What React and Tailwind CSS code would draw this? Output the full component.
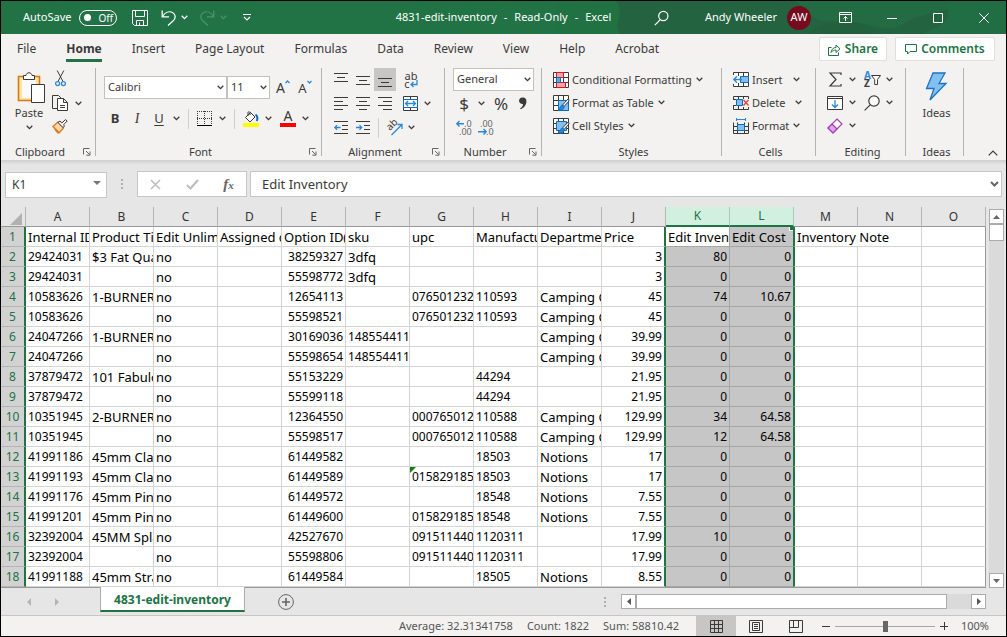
import { useState } from 'react';
import clsx from 'clsx';
import { twMerge } from 'tailwind-merge';

const tabs = ['File', 'Home', 'Insert', 'Page Layout', 'Formulas', 'Data', 'Review', 'View', 'Help', 'Acrobat'];
const columns = ['A', 'B', 'C', 'D', 'E', 'F', 'G', 'H', 'I', 'J', 'K', 'L', 'M', 'N', 'O'];
const numeric = ['E', 'J', 'K', 'L'];
const headings = ['Internal ID', 'Product Title', 'Edit Unlimited', 'Assigned categories', 'Option ID(s)', 'sku', 'upc', 'Manufacturer', 'Department', 'Price', 'Edit Inventory', 'Edit Cost', 'Inventory Note', null, ''];

const rows = [
  ['29424031', '$3 Fat Quarters', 'no', '', '38259327', '3dfq', '', '', '', '3', '80', '0'],
  ['29424031', '', 'no', '', '55598772', '3dfq', '', '', '', '3', '0', '0'],
  ['10583626', '1-BURNER', 'no', '', '12654113', '', '076501232', '110593', 'Camping Gear', '45', '74', '10.67'],
  ['10583626', '', 'no', '', '55598521', '', '076501232', '110593', 'Camping Gear', '45', '0', '0'],
  ['24047266', '1-BURNER', 'no', '', '30169036', '148554411', '', '', 'Camping Gear', '39.99', '0', '0'],
  ['24047266', '', 'no', '', '55598654', '148554411', '', '', 'Camping Gear', '39.99', '0', '0'],
  ['37879472', '101 Fabulous', 'no', '', '55153229', '', '', '44294', '', '21.95', '0', '0'],
  ['37879472', '', 'no', '', '55599118', '', '', '44294', '', '21.95', '0', '0'],
  ['10351945', '2-BURNER', 'no', '', '12364550', '', '000765012', '110588', 'Camping Gear', '129.99', '34', '64.58'],
  ['10351945', '', 'no', '', '55598517', '', '000765012', '110588', 'Camping Gear', '129.99', '12', '64.58'],
  ['41991186', '45mm Clasp', 'no', '', '61449582', '', '', '18503', 'Notions', '17', '0', '0'],
  ['41991193', '45mm Clasp', 'no', '', '61449589', '', '015829185', '18503', 'Notions', '17', '0', '0'],
  ['41991176', '45mm Pins', 'no', '', '61449572', '', '', '18548', 'Notions', '7.55', '0', '0'],
  ['41991201', '45mm Pins', 'no', '', '61449600', '', '015829185', '18548', 'Notions', '7.55', '0', '0'],
  ['32392004', '45MM Splash', 'no', '', '42527670', '', '091511440', '1120311', '', '17.99', '10', '0'],
  ['32392004', '', 'no', '', '55598806', '', '091511440', '1120311', '', '17.99', '0', '0'],
  ['41991188', '45mm Straight', 'no', '', '61449584', '', '', '18505', 'Notions', '8.55', '0', '0'],
];

function Icon({ w = 16, h = 16, className, children }) {
  return (
    <svg width={w} height={h} viewBox={`0 0 ${w} ${h}`} fill="none" stroke="#3b3a39" className={clsx('shrink-0 overflow-visible', className)} aria-hidden="true">
      {children}
    </svg>
  );
}

function Chevron({ className }) {
  return (
    <Icon w={7} h={5} className={className}>
      <path d="M.7 .8 3.5 3.6 6.3 .8" stroke="currentColor" strokeWidth="1.3" />
    </Icon>
  );
}

function Drop({ label, className }) {
  return (
    <button type="button" aria-label={label} className={clsx('flex h-5 w-3 shrink-0 items-center justify-center', className)}>
      <Chevron />
    </button>
  );
}

function Tool({ label, className, children }) {
  return (
    <button type="button" aria-label={label} className={twMerge('flex h-[23px] w-[22px] shrink-0 items-center justify-center', className)}>
      {children}
    </button>
  );
}

function Divider({ className }) {
  return <span className={clsx('h-5 w-px bg-[#d2d0ce]', className)} />;
}

function Picker({ label, value, className }) {
  return (
    <div className={clsx('relative h-[23px]', className)}>
      <select aria-label={label} defaultValue={value} className="block h-full w-full appearance-none border border-[#c3c1bf] bg-white pl-[3px] text-[11px] text-[#3b3a39]">
        <option>{value}</option>
      </select>
      <Chevron className="pointer-events-none absolute top-[9px] right-[3px]" />
    </div>
  );
}

function Group({ title, launcher, className, bodyClass, children }) {
  return (
    <section aria-label={title} className={clsx('flex shrink-0 pt-[2px]', className)}>
      <div className="flex min-w-0 flex-1 flex-col">
        <div className={clsx('h-[78px]', bodyClass)}>{children}</div>
        <div className="flex h-3 items-center pr-1">
          <span className={clsx('flex-1 text-center text-[11px] leading-3', launcher ? 'pr-1' : 'pl-2')}>{title}</span>
          {launcher && (
            <button type="button" aria-label={`${title} settings`}>
              <Icon w={8} h={8}>
                <path d="M.5 6.5V.5H6.5M3 3 6.5 6.5M7 3.5V7.2H3.3" stroke="#666" />
              </Icon>
            </button>
          )}
        </div>
      </div>
      <div className="mb-1 w-px bg-[#b5b3b1]" />
    </section>
  );
}

function Lines({ ys, xs }) {
  return (
    <Icon w={14} h={14}>
      {ys.map((y, i) => (
        <path key={y} d={`M${xs[i][0]} ${y}.5H${xs[i][1]}`} />
      ))}
    </Icon>
  );
}

const SheetBase = () => <path d="M.5 .5H15.5V15.5H.5ZM.5 5.5H15.5M.5 10.5H15.5M5.5 .5V15.5M10.5 .5V15.5" fill="#fff" />;

function ConditionalIcon() {
  return (
    <Icon>
      <SheetBase />
      <path d="M3.5 .5H10.5V5.5H3.5ZM3.5 10.5H12.5V15.5H3.5Z" fill="#f9a3a3" stroke="#e81123" />
      <path d="M3.5 5.5H7.5V10.5H3.5Z" fill="#5fa8e0" stroke="#0f6cbd" />
    </Icon>
  );
}

function BrushSheetIcon({ full }) {
  return (
    <Icon>
      <SheetBase />
      <path d={full ? 'M3.5 3.5H13.5V12.5H3.5Z' : 'M5.5 5.5H15.5V15.5H5.5Z'} fill="#83beec" stroke="#0f6cbd" />
      <path d="M15.5 3.5 9.5 10 11 11.5 16 6Z" fill="#fff" />
      <path d="M9.5 10C7.5 10.3 8 13 5 14.5 8 16.2 11.3 14.5 11 11.5Z" fill="#2b88d8" stroke="#0f6cbd" />
    </Icon>
  );
}

function InsertIcon() {
  return (
    <Icon>
      <path d="M.5 3V.5H15.5V14.5H.5V12M5.5 .5V4M10.5 .5V14.5M5.5 11V14.5" fill="#fff" />
      <path d="M7.5 4.5H15.5V10.5H7.5Z" fill="#83beec" stroke="#0f6cbd" />
      <path d="M9 7.5H1M4 4.2 .8 7.5 4 10.8" stroke="#2b88d8" strokeWidth="1.4" />
    </Icon>
  );
}

function DeleteIcon() {
  return (
    <Icon>
      <path d="M.5 4V1.5H15.5V4M.5 11V14.5H15.5V12M5.5 1.5V4M10.5 1.5V4M5.5 11V14.5M10.5 12V14.5M0 4.5H3M0 10.5H3" />
      <path d="M3.5 4.5H9.5V10.5H3.5Z" fill="#83beec" stroke="#0f6cbd" />
      <path d="M10.5 5 15.5 10.5M15.5 5 10.5 10.5" stroke="#e8413c" strokeWidth="1.4" />
    </Icon>
  );
}

function FormatIcon() {
  return (
    <Icon>
      <path d="M.5 4.5V15.5H15.5V4.5M.5 8.5H15.5M.5 12.5H15.5M4.5 4.5V15.5M11.5 4.5V15.5" />
      <path d="M4.5 6.5H11.5V12.5H4.5Z" fill="#83beec" stroke="#0f6cbd" />
      <path d="M3.5 0V3M12.5 0V3M3.5 1.5H12.5" stroke="#2b88d8" />
    </Icon>
  );
}

function MenuRow({ icon, label, gap = 'gap-1' }) {
  return (
    <button type="button" className={clsx('flex h-[23px] items-center text-[11px] leading-4 whitespace-nowrap', gap)}>
      <span className="flex items-center gap-[3px]">
        {icon}
        {label}
      </span>
      <Chevron />
    </button>
  );
}

function TitleBar() {
  const [autoSave, setAutoSave] = useState(false);

  return (
    <header className="relative grid h-[33px] shrink-0 grid-cols-[1fr_auto_1fr] items-center overflow-hidden bg-[#217346] text-[11px] text-white">
      <svg className="absolute inset-y-0 right-0" width="450" height="33" aria-hidden="true">
        <path d="M0 0H450V33H0Z" fill="#22703f" fillOpacity=".3" />
        <path d="M60 0H450V33H64C56 22 70 12 60 0Z" fill="#24633f" />
        <path d="M240 0H405C390 14 360 12 346 24 330 34 300 16 280 20 256 22 250 10 240 0Z" fill="#226b43" />
        <path d="M390 0H450V33H368C386 24 398 20 390 0Z" fill="#226e44" />
        <ellipse cx="288" cy="33" rx="32" ry="12" fill="#23603e" />
      </svg>
      <div className="relative flex items-center pl-[22px]">
        <label className="flex items-center gap-2">
          AutoSave
          <span className="relative flex h-4 w-[38px] items-center rounded-full border border-white">
            <input type="checkbox" checked={autoSave} onChange={(e) => setAutoSave(e.target.checked)} className="absolute inset-0 appearance-none" />
            <span className="ml-1 size-[7px] rounded-full bg-white" />
            <span className="ml-[7px] text-[10px] leading-3">{autoSave ? 'On' : 'Off'}</span>
          </span>
        </label>
        <button type="button" aria-label="Save" className="ml-[15px]">
          <Icon>
            <path d="M.5 .5H15.5V15.5H2.5L.5 13.5ZM3.5 .5V6.5H12.5V.5M4.5 15.5V10.5H11.5V15.5M7.5 12.5V15.5" stroke="#fff" />
          </Icon>
        </button>
        <button type="button" aria-label="Undo" className="ml-[13px] flex items-center gap-1">
          <Icon>
            <path d="M1.2 .5V6.8H8M1.5 6.5C4 2.5 8 .8 11.5 2.5 15 4.5 15 8.5 12 11L7 15.5" stroke="#fff" strokeWidth="1.3" />
          </Icon>
          <Chevron />
        </button>
        <button type="button" aria-label="Redo" disabled className="ml-3 flex items-center gap-1 text-[#4f9070]">
          <Icon>
            <path d="M13.8 .5V6.8H7M13.5 6.5C11 2.5 7 .8 3.5 2.5 0 4.5 0 8.5 3 11L8 15.5" stroke="currentColor" strokeWidth="1.3" />
          </Icon>
          <Chevron />
        </button>
        <button type="button" aria-label="Customize toolbar" className="ml-4">
          <Icon w={8} h={7}>
            <path d="M0 .5H8M1 3 4 6 7 3" stroke="#fff" strokeWidth="1.2" />
          </Icon>
        </button>
      </div>
      <h1 className="relative flex gap-[7px] whitespace-nowrap">
        <span>4831-edit-inventory</span>
        <span>-</span>
        <span>Read-Only</span>
        <span>-</span>
        <span>Excel</span>
      </h1>
      <div className="relative flex items-center justify-end">
        <button type="button" aria-label="Search" className="mr-9">
          <Icon w={15}>
            <path d="M6 10 .8 15.2" stroke="#fff" strokeWidth="1.2" />
            <circle cx="9.3" cy="6" r="4.6" stroke="#fff" strokeWidth="1.2" />
          </Icon>
        </button>
        <span className="whitespace-nowrap">Andy Wheeler</span>
        <span className="ml-[10px] flex size-6 items-center justify-center rounded-full bg-[#750b1c]">AW</span>
        <button type="button" aria-label="Ribbon display options" className="ml-[28px]">
          <Icon w={13} h={11}>
            <path d="M.5 .5H12.5V10.5H.5ZM.5 2.5H12.5M6.5 9V4.5M4.5 6.5 6.5 4.5 8.5 6.5" stroke="#fff" />
          </Icon>
        </button>
        <button type="button" aria-label="Minimize" className="ml-[35px]">
          <Icon w={10} h={10}>
            <path d="M0 5.5H10" stroke="#fff" />
          </Icon>
        </button>
        <button type="button" aria-label="Maximize" className="ml-9">
          <Icon w={10} h={10}>
            <path d="M.5 .5H9.5V9.5H.5Z" stroke="#fff" />
          </Icon>
        </button>
        <button type="button" aria-label="Close" className="mr-[17px] ml-9">
          <Icon w={10} h={10}>
            <path d="M.3 .3 9.7 9.7M9.7 .3 .3 9.7" stroke="#fff" />
          </Icon>
        </button>
      </div>
    </header>
  );
}

function TabRow() {
  const [active, setActive] = useState('Home');

  return (
    <nav className="flex h-8 shrink-0 items-center">
      <div className="flex flex-1 gap-[30px] pl-4">
        {tabs.map((tab) => (
          <button
            key={tab}
            type="button"
            onClick={() => setActive(tab)}
            className={clsx('h-6 border-b-3 text-[12px] leading-4 whitespace-nowrap', tab === active ? 'border-[#217346] font-bold' : 'border-transparent')}
          >
            {tab}
          </button>
        ))}
      </div>
      <div className="mb-[2px] flex gap-2 pr-[11px] text-[12px] font-semibold text-[#217346]">
        <button type="button" className="flex h-6 w-[68px] items-center justify-center gap-1 rounded-xs border border-[#e1dfdd] bg-white">
          <Icon w={13} h={13}>
            <path d="M3.5 4.5H.5V12.5H10.5V9.5M3 9.5C3.5 6 5.5 4.5 8 4.5V2L12 5.8 8 9.5V7C6 7 4.5 7.5 3 9.5Z" stroke="#217346" />
          </Icon>
          Share
        </button>
        <button type="button" className="flex h-6 w-[100px] items-center justify-center gap-1 rounded-xs border border-[#e1dfdd] bg-white">
          <Icon w={12} h={12}>
            <path d="M.5 1.5H11.5V8.5H5L2.5 11V8.5H.5Z" stroke="#217346" />
          </Icon>
          Comments
        </button>
      </div>
    </nav>
  );
}

function Ribbon() {
  return (
    <div className="flex h-[94px] shrink-0 overflow-hidden">
      <Group title="Clipboard" launcher className="w-[95px]" bodyClass="flex">
        <button type="button" className="ml-3 flex w-8 flex-col items-center pt-1 text-[11px] leading-4">
          <Icon w={28} h={31} className="mb-[2px] ml-1">
            <path d="M1.5 4.5H22.5V28.5H1.5Z" fill="#fbe2a5" stroke="#d9780f" strokeWidth="1.6" />
            <path d="M5 8H19V26H5Z" fill="#fafafa" stroke="none" />
            <path d="M6.5 7.5V3.5H9C9.5 -.2 14.5 -.2 15 3.5H17.5V7.5Z" fill="#fff" />
            <path d="M14.5 12.5H27.5V30.5H14.5Z" fill="#fff" />
          </Icon>
          Paste
          <Chevron className="mt-1" />
        </button>
        <div className="ml-[7px] flex flex-col gap-2 pt-[2px]">
          <Tool label="Cut" className="h-[17px] w-4">
            <Icon w={11} h={17}>
              <path d="M2.2 .5 8 11.5M8.8 .5 3 11.5" />
              <circle cx="2.6" cy="13.6" r="2" stroke="#2b88d8" strokeWidth="1.3" />
              <circle cx="8.4" cy="13.6" r="2" stroke="#2b88d8" strokeWidth="1.3" />
            </Icon>
          </Tool>
          <div className="flex h-4 items-center">
            <Tool label="Copy" className="h-4 w-4">
              <Icon>
                <path d="M5 13.5H.5V.5H6.5L9 3" />
                <path d="M5.5 3.5H11.5L15.5 7.5V15.5H5.5ZM11.5 3.5V7.5H15.5M8 10.5H13M8 12.5H13" fill="#fff" />
              </Icon>
            </Tool>
            <Drop label="Copy options" className="ml-1" />
          </div>
          <Tool label="Format painter" className="h-4 w-4">
            <Icon>
              <path d="M6 3 1 7.5 7 14 11.5 9Z" fill="#fbd7ad" stroke="#e07b16" strokeWidth="1.4" />
              <path d="M3 10 6.5 14" stroke="#e07b16" strokeWidth="2" />
              <path d="M6 3.5 11 8.5 12.5 7 11.5 5.8 15.2 2 13.5 .6 9.8 4 8 2Z" fill="#fff" />
            </Icon>
          </Tool>
        </div>
      </Group>

      <Group title="Font" launcher className="w-[226px]" bodyClass="flex flex-col gap-2 pt-2 pl-2">
        <div className="flex items-center">
          <Picker label="Font name" value="Calibri" className="w-[123px]" />
          <Picker label="Font size" value="11" className="w-[43px]" />
          <Tool label="Increase font size" className="ml-[2px]">
            <span className="text-[14px] leading-5">A</span>
            <Icon w={5} h={4} className="mb-3">
              <path d="M.5 3 2.5 1 4.5 3" stroke="#2b88d8" strokeWidth="1.3" />
            </Icon>
          </Tool>
          <Tool label="Decrease font size">
            <span className="text-[13px] leading-5">A</span>
            <Icon w={5} h={4} className="mb-3">
              <path d="M.5 1 2.5 3 4.5 1" stroke="#2b88d8" strokeWidth="1.3" />
            </Icon>
          </Tool>
        </div>
        <div className="flex items-center">
          <Tool label="Bold"><b className="text-[13px]">B</b></Tool>
          <Tool label="Italic"><i className="font-['Liberation_Serif',serif] text-[14px]">I</i></Tool>
          <Tool label="Underline"><u className="text-[13px] underline-offset-2">U</u></Tool>
          <Drop label="Underline style" />
          <Divider className="mr-[5px] ml-[6px]" />
          <Tool label="Borders">
            <Icon>
              <path d="M0 .5H15M.5 0V14M14.5 0V14M7.5 0V14M0 7.5H15" strokeDasharray="1 1" />
              <path d="M0 14.5H15" stroke="#000" />
            </Icon>
          </Tool>
          <Drop label="Border style" />
          <Divider className="mr-[5px] ml-[6px]" />
          <Tool label="Fill color">
            <Icon>
              <path d="M7.5 1.5 12 6 7 11 2.5 6.5ZM5 5V1.5C5 .5 7 .5 7 1.5V4" fill="#fff" />
              <path d="M12.5 3.5C14.5 5 15 7 13.8 10" stroke="#0f6cbd" strokeWidth="2" />
              <path d="M0 14H16" stroke="#ffff00" strokeWidth="4" />
            </Icon>
          </Tool>
          <Drop label="Fill palette" />
          <Tool label="Font color" className="ml-[3px] flex-col">
            <span className="text-[14px] leading-3">A</span>
            <span className="mt-px h-1 w-4 bg-[#ff0000]" />
          </Tool>
          <Drop label="Font palette" />
        </div>
      </Group>

      <Group title="Alignment" launcher className="w-[123px]" bodyClass="flex flex-col gap-px pl-2">
        <div className="flex">
          <Tool label="Top align"><Lines ys={[0, 4, 8]} xs={[[0, 14], [3, 11], [0, 14]]} /></Tool>
          <Tool label="Middle align"><Lines ys={[3, 7, 11]} xs={[[0, 14], [3, 11], [0, 14]]} /></Tool>
          <Tool label="Bottom align" className="bg-[#c8c6c4]"><Lines ys={[5, 9, 13]} xs={[[0, 14], [3, 11], [0, 14]]} /></Tool>
          <Tool label="Wrap text" className="ml-1 flex-col">
            <span className="text-[11px] leading-[8px]">ab</span>
            <span className="flex items-center text-[11px] leading-[8px]">
              c
              <Icon w={8} h={8}>
                <path d="M7 0V4.5H1M3.5 2 1 4.5 3.5 7" stroke="#2b88d8" strokeWidth="1.3" />
              </Icon>
            </span>
          </Tool>
        </div>
        <div className="flex items-center">
          <Tool label="Align left"><Lines ys={[0, 4, 8, 12]} xs={[[0, 14], [0, 9], [0, 14], [0, 9]]} /></Tool>
          <Tool label="Center"><Lines ys={[0, 4, 8, 12]} xs={[[0, 14], [3, 11], [0, 14], [3, 11]]} /></Tool>
          <Tool label="Align right"><Lines ys={[0, 4, 8, 12]} xs={[[0, 14], [5, 14], [0, 14], [5, 14]]} /></Tool>
          <Tool label="Merge and center" className="ml-[3px]">
            <Icon w={15} h={15}>
              <path d="M.5 .5H14.5V14.5H.5ZM7.5 .5V4M7.5 11V14.5" fill="#fff" />
              <path d="M.5 3.5H14.5V11.5H.5Z" fill="#fff" stroke="#0f6cbd" />
              <path d="M2.5 7.5H12.5M5 5 2.5 7.5 5 10M10 5 12.5 7.5 10 10" stroke="#2b88d8" strokeWidth="1.3" />
            </Icon>
          </Tool>
          <Drop label="Merge options" />
        </div>
        <div className="flex items-center">
          <Tool label="Decrease indent">
            <Icon w={14} h={14}>
              <path d="M0 .5H14M8 4.5H14M8 8.5H14M0 12.5H14" />
              <path d="M6.5 6.5H.8M3 4.2 .8 6.5 3 8.8" stroke="#2b88d8" strokeWidth="1.3" />
            </Icon>
          </Tool>
          <Tool label="Increase indent">
            <Icon w={14} h={14}>
              <path d="M0 .5H14M8 4.5H14M8 8.5H14M0 12.5H14" />
              <path d="M0 6.5H5.7M3.5 4.2 5.7 6.5 3.5 8.8" stroke="#2b88d8" strokeWidth="1.3" />
            </Icon>
          </Tool>
          <Divider className="mx-1" />
          <Tool label="Orientation">
            <Icon w={16} h={16}>
              <text transform="translate(4 11) rotate(-45)" fontSize="10" fill="#3b3a39" stroke="none">ab</text>
              <path d="M5.5 15 15.5 5M11.5 4.5H16V9" stroke="#2b88d8" strokeWidth="1.3" />
            </Icon>
          </Tool>
          <Drop label="Orientation options" />
        </div>
      </Group>

      <Group title="Number" launcher className="w-[97px]" bodyClass="flex flex-col gap-px pl-2">
        <Picker label="Number format" value="General" className="w-[81px]" />
        <div className="flex items-center">
          <Tool label="Currency"><span className="text-[17px] leading-5">$</span></Tool>
          <Drop label="Currency options" />
          <Tool label="Percent" className="ml-[3px]"><span className="text-[17px] leading-5">%</span></Tool>
          <Tool label="Comma style">
            <Icon w={8} h={13}>
              <path d="M3.8 .5A3.3 3.3 0 0 1 7.4 4.2C7.4 8 5 10.8 1.5 12.3L1.2 11.3C3 10.2 4 8.8 4 7A3.3 3.3 0 1 1 3.8 .5Z" fill="#3b3a39" stroke="none" />
            </Icon>
          </Tool>
        </div>
        <div className="flex items-center">
          <Tool label="Increase decimal">
            <Icon w={16} h={16}>
              <path d="M8 3.8H1M3.5 1 .8 3.8 3.5 6.5" stroke="#2b88d8" strokeWidth="1.4" />
              <text x="8" y="7" fontSize="9" fill="#666" stroke="none">.0</text>
              <text x="3" y="15" fontSize="9" fill="#666" stroke="none">.00</text>
            </Icon>
          </Tool>
          <Tool label="Decrease decimal">
            <Icon w={16} h={16}>
              <path d="M0 11.8H8M5.5 9 8.2 11.8 5.5 14.5" stroke="#2b88d8" strokeWidth="1.4" />
              <text x="2" y="7" fontSize="9" fill="#666" stroke="none">.00</text>
              <text x="8" y="15" fontSize="9" fill="#666" stroke="none">.0</text>
            </Icon>
          </Tool>
        </div>
      </Group>

      <Group title="Styles" className="w-[180px]" bodyClass="flex flex-col items-start pl-[11px]">
        <MenuRow icon={<ConditionalIcon />} label="Conditional Formatting" />
        <MenuRow icon={<BrushSheetIcon />} label="Format as Table" />
        <MenuRow icon={<BrushSheetIcon full />} label="Cell Styles" />
      </Group>

      <Group title="Cells" className="w-[94px]" bodyClass="flex flex-col items-start pl-[11px]">
        <MenuRow icon={<InsertIcon />} label="Insert" gap="gap-[10px]" />
        <MenuRow icon={<DeleteIcon />} label="Delete" gap="gap-[10px]" />
        <MenuRow icon={<FormatIcon />} label="Format" />
      </Group>

      <Group title="Editing" className="w-[90px]" bodyClass="flex flex-col pl-2">
        <div className="flex items-center">
          <Tool label="AutoSum">
            <Icon w={13} h={15}>
              <path d="M12 3V1H1L7 7.5 1 14H12V12" strokeWidth="1.2" />
            </Icon>
          </Tool>
          <Drop label="AutoSum options" />
          <Tool label="Sort and filter" className="ml-[3px]">
            <Icon w={17} h={17}>
              <text x="0" y="8" fontSize="10" fontWeight="bold" fill="#2b88d8" stroke="none">A</text>
              <text x="0" y="16" fontSize="10" fontWeight="bold" fill="#3b3a39" stroke="none">Z</text>
              <path d="M7.5 4.5H16.5L13.5 8.5V13.5H10.7V8.5Z" fill="#fff" />
            </Icon>
          </Tool>
          <Drop label="Sort options" />
        </div>
        <div className="flex items-center">
          <Tool label="Fill">
            <Icon w={16} h={14}>
              <path d="M.5 .5H15.5V13.5H.5ZM.5 2.5H15.5" fill="#fff" />
              <path d="M8 4V11.5M5 8.5 8 11.5 11 8.5" stroke="#2b88d8" strokeWidth="1.3" />
            </Icon>
          </Tool>
          <Drop label="Fill options" />
          <Tool label="Find and select" className="ml-[3px]">
            <Icon>
              <circle cx="10" cy="6" r="5.2" fill="#fff" strokeWidth="1.2" />
              <path d="M6.2 9.8 .6 15.4" strokeWidth="1.2" />
            </Icon>
          </Tool>
          <Drop label="Find options" />
        </div>
        <div className="flex items-center">
          <Tool label="Clear">
            <Icon>
              <path d="M10 1 15 6 6 15 1 10Z" fill="#fff" stroke="#a33fb0" strokeWidth="1.2" />
              <path d="M5 6 10 11 6 15 1 10Z" fill="#e3a4ea" stroke="#a33fb0" strokeWidth="1.2" />
            </Icon>
          </Tool>
          <Drop label="Clear options" />
        </div>
      </Group>

      <Group title="Ideas" className="w-[58px]" bodyClass="flex justify-center pl-1">
        <button type="button" className="flex flex-col items-center pt-1 text-[11px] leading-4">
          <Icon w={22} h={29} className="mb-1">
            <path d="M8 1H20L14 11.5H21L5 28 9 16.5H1.5Z" fill="#83c0f0" stroke="#1a73c4" strokeWidth="1.3" />
          </Icon>
          Ideas
        </button>
      </Group>

      <div className="flex flex-1 items-end justify-end pr-2 pb-1">
        <button type="button" aria-label="Collapse the ribbon">
          <Icon w={10} h={6}>
            <path d="M.7 5.3 5 1 9.3 5.3" strokeWidth="1.2" />
          </Icon>
        </button>
      </div>
    </div>
  );
}

function Dots() {
  return (
    <span className="flex flex-col gap-[2px]">
      <span className="size-[2px] bg-[#b0b0b0]" />
      <span className="size-[2px] bg-[#b0b0b0]" />
      <span className="size-[2px] bg-[#b0b0b0]" />
    </span>
  );
}

function FormulaBar({ value, onChange }) {
  return (
    <div className="flex h-[47px] shrink-0 bg-linear-to-b from-[#cfcfcf] to-[#e6e6e6] to-10% pt-[11px] pr-1 pb-[10px] pl-1">
      <div className="relative w-[102px]">
        <input aria-label="Name box" defaultValue="K1" className="h-full w-full border border-[#c6c6c6] bg-white pl-[6px] text-[12px]" />
        <Icon w={8} h={5} className="pointer-events-none absolute top-[10px] right-[6px]">
          <path d="M0 0H8L4 4Z" fill="#777" stroke="none" />
        </Icon>
      </div>
      <div className="flex w-[30px] items-center justify-center"><Dots /></div>
      <div className="flex w-[110px] items-center justify-around border border-[#c6c6c6] bg-white">
        <button type="button" aria-label="Cancel">
          <Icon w={11} h={11}>
            <path d="M1 1 10 10M10 1 1 10" stroke="#bdbdbd" strokeWidth="1.5" />
          </Icon>
        </button>
        <button type="button" aria-label="Enter">
          <Icon w={13} h={11}>
            <path d="M1 6 4.5 9.5 12 1" stroke="#bdbdbd" strokeWidth="2" />
          </Icon>
        </button>
        <button type="button" aria-label="Insert function" className="flex items-baseline font-['Liberation_Serif',serif] text-[15px] leading-5 font-bold text-[#666] italic">
          f<span className="text-[11px]">x</span>
        </button>
      </div>
      <div className="relative ml-[3px] flex-1">
        <input aria-label="Formula bar" value={value} onChange={(e) => onChange(e.target.value)} className="h-full w-full border border-[#c6c6c6] bg-white pl-[11px] text-[13px]" />
        <Icon w={9} h={7} className="pointer-events-none absolute top-[10px] right-[3px]">
          <path d="M1 1 4.5 4.5 8 1" stroke="#666" strokeWidth="2" />
        </Icon>
      </div>
    </div>
  );
}

function Cell({ col, value, first, flagged, colSpan }) {
  const selected = col === 'K' || col === 'L';
  const digits = /^[\d.]+$/.test(value);

  return (
    <td
      colSpan={colSpan}
      className={clsx(
        'relative h-5 overflow-hidden border-b px-[2px] pt-px pb-0 leading-[18px] whitespace-nowrap',
        digits ? 'text-[12px]' : 'text-[13px]',
        !first && numeric.includes(col) && 'text-right',
        selected ? 'border-b-[#a6a6a6]' : 'border-b-[#d4d4d4]',
        selected && !(first && col === 'K') ? 'bg-[#c6c6c6]' : 'bg-white',
        col === 'J' && 'border-r-2 border-r-[#217346]',
        col === 'K' && 'border-r border-r-[#a6a6a6]',
        col === 'L' && 'border-r border-r-[#217346]',
        col === 'M' && 'border-l border-l-[#217346]',
        col === 'O' && 'border-r border-r-[#999]',
        !['J', 'K', 'L', 'O'].includes(col) && 'border-r border-r-[#d4d4d4]'
      )}
    >
      {value}
      {flagged && <span className="absolute top-0 left-0 size-0 border-t-6 border-r-6 border-t-[#107c10] border-r-transparent" />}
      {first && col === 'L' && <span className="absolute top-0 right-0 size-1 border-b border-l border-white bg-[#217346]" />}
    </td>
  );
}

function Sheet({ headingRow }) {
  return (
    <div className="flex shrink-0">
      <div className="min-w-0 flex-1 overflow-hidden border-b border-[#999]">
        <table className="w-full table-fixed border-separate border-spacing-0 text-black">
          <thead>
            <tr>
              <th aria-label="Select all" className="h-5 w-[25px] border-r border-b border-r-[#b5b5b5] border-b-[#999] p-0">
                <Icon w={12} h={12} className="mt-1 ml-[9px]">
                  <path d="M12 0V12H0Z" fill="#b1b1b1" stroke="none" />
                </Icon>
              </th>
              {columns.map((col) => {
                const selected = col === 'K' || col === 'L';
                return (
                  <th
                    key={col}
                    scope="col"
                    className={clsx(
                      'h-5 border-r p-0 text-[12px] leading-[18px] font-normal',
                      selected ? 'border-b-2 border-r-[#a9c9b8] border-b-[#217346] bg-[#d2f0e0] text-[#217346]' : 'border-b border-r-[#b5b5b5] border-b-[#999] text-[#333]'
                    )}
                  >
                    {col}
                  </th>
                );
              })}
            </tr>
          </thead>
          <tbody>
            {[headingRow, ...rows].map((row, r) => (
              <tr key={r}>
                <th scope="row" className="h-5 border-r-2 border-b border-r-[#217346] border-b-[#b5b5b5] bg-[#d2d2d2] px-0 pt-px pb-0 text-[12px] leading-[18px] font-normal text-[#217346]">
                  {r + 1}
                </th>
                {columns.map((col, c) =>
                  row[c] === null ? null : (
                    <Cell key={col} col={col} value={row[c] ?? ''} first={r === 0} flagged={r === 12 && col === 'G'} colSpan={r === 0 && col === 'M' ? 2 : 1} />
                  )
                )}
              </tr>
            ))}
          </tbody>
        </table>
      </div>
      <div className="flex w-5 shrink-0 flex-col pt-[2px] pl-[3px]">
        <div className="flex w-[15px] flex-1 flex-col bg-[#dadada]">
          <button type="button" aria-label="Scroll up" className="flex h-[15px] items-center justify-center border border-[#ababab] bg-white">
            <Icon w={7} h={4}><path d="M0 4 3.5 0 7 4Z" fill="#666" stroke="none" /></Icon>
          </button>
          <div className="h-[17px] border border-[#ababab] bg-white" />
          <button type="button" aria-label="Scroll down" className="mt-auto flex h-[15px] items-center justify-center border border-[#ababab] bg-white">
            <Icon w={7} h={4}><path d="M0 0H7L3.5 4Z" fill="#666" stroke="none" /></Icon>
          </button>
        </div>
      </div>
    </div>
  );
}

function SheetTabs() {
  return (
    <div className="flex h-[27px] shrink-0 items-center pr-5">
      <div className="flex w-[99px] gap-6 pl-[26px]">
        <button type="button" aria-label="Previous sheet"><Icon w={4} h={8}><path d="M4 0V8L0 4Z" fill="#b5b5b5" stroke="none" /></Icon></button>
        <button type="button" aria-label="Next sheet"><Icon w={4} h={8}><path d="M0 0V8L4 4Z" fill="#b5b5b5" stroke="none" /></Icon></button>
      </div>
      <button type="button" className="-mt-px h-[25px] w-[145px] self-start border-x border-b-2 border-x-[#ababab] border-b-[#217346] bg-white pt-[3px] text-[12px] leading-4 font-bold text-[#217346]">
        4831-edit-inventory
      </button>
      <button type="button" aria-label="New sheet" className="ml-[33px]">
        <Icon>
          <circle cx="8" cy="8" r="7.4" stroke="#666" />
          <path d="M8 4V12M4 8H12" stroke="#666" strokeWidth="1.6" />
        </Icon>
      </button>
      <div className="ml-auto mr-[15px]"><Dots /></div>
      <div className="flex h-[15px] w-[365px] bg-[#dadada]">
        <button type="button" aria-label="Scroll left" className="flex w-[15px] items-center justify-center border border-[#ababab] bg-white">
          <Icon w={4} h={7}><path d="M4 0V7L0 3.5Z" fill="#555" stroke="none" /></Icon>
        </button>
        <div className="w-[311px] border border-[#ababab] bg-white" />
        <button type="button" aria-label="Scroll right" className="ml-auto flex w-[15px] items-center justify-center border border-[#ababab] bg-white">
          <Icon w={4} h={7}><path d="M0 0V7L4 3.5Z" fill="#555" stroke="none" /></Icon>
        </button>
      </div>
    </div>
  );
}

function StatusBar() {
  const [zoom, setZoom] = useState(100);

  return (
    <footer className="flex h-[21px] shrink-0 items-center justify-end border-t border-[#c6c6c6] bg-[#f3f2f1] pr-[17px] text-[11px] whitespace-nowrap text-[#555]">
      <span>Average: 32.31341758</span>
      <span className="ml-[14px]">Count: 1822</span>
      <span className="ml-[14px]">Sum: 58810.42</span>
      <button type="button" aria-label="Normal view" className="ml-[17px] flex h-full w-10 items-center justify-center bg-[#c8c6c4]">
        <Icon w={13} h={13}><path d="M.5 .5H12.5V12.5H.5ZM.5 4.5H12.5M.5 8.5H12.5M4.5 .5V12.5M8.5 .5V12.5" /></Icon>
      </button>
      <button type="button" aria-label="Page layout view" className="flex w-10 justify-center">
        <Icon w={14} h={13}><path d="M.5 .5H13.5V12.5H.5ZM3.5 2.5H10.5V10.5H3.5ZM5 4.5H9M5 6.5H9M5 8.5H9" /></Icon>
      </button>
      <button type="button" aria-label="Page break preview" className="flex w-10 justify-center">
        <Icon w={14} h={13}><path d="M.5 .5H13.5V12.5H.5ZM4.5 .5V7.5M9.5 .5V7.5M.5 7.5H9.5" /></Icon>
      </button>
      <button type="button" aria-label="Zoom out" onClick={() => setZoom(zoom - 10)} className="ml-[6px]">
        <Icon w={8} h={8}><path d="M0 4.5H8" /></Icon>
      </button>
      <input
        type="range"
        aria-label="Zoom"
        min="0"
        max="200"
        value={zoom}
        onChange={(e) => setZoom(Number(e.target.value))}
        className="mx-[5px] h-px w-[100px] appearance-none bg-[#a6a6a6] [&::-webkit-slider-thumb]:h-[11px] [&::-webkit-slider-thumb]:w-[5px] [&::-webkit-slider-thumb]:appearance-none [&::-webkit-slider-thumb]:bg-[#666]"
      />
      <button type="button" aria-label="Zoom in" onClick={() => setZoom(zoom + 10)}>
        <Icon w={8} h={8}><path d="M0 4.5H8M4.5 0V8" /></Icon>
      </button>
      <span className="ml-3 w-[29px] text-right">{zoom}%</span>
    </footer>
  );
}

export default function App() {
  const [formula, setFormula] = useState('Edit Inventory');
  const headingRow = headings.map((heading, i) => (i === 10 ? formula : heading));

  return (
    <div className="flex min-h-screen w-full flex-col overflow-hidden border border-black bg-[#e6e6e6] font-['Noto_Sans',sans-serif] text-[#3b3a39]">
      <TitleBar />
      <div className="bg-[#f3f2f1]">
        <TabRow />
        <Ribbon />
      </div>
      <FormulaBar value={formula} onChange={setFormula} />
      <Sheet headingRow={headingRow} />
      <SheetTabs />
      <StatusBar />
    </div>
  );
}
